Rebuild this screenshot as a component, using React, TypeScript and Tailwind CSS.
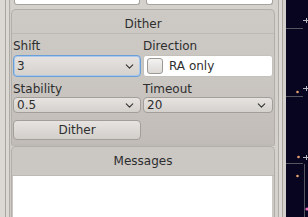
import { ChevronDown } from 'lucide-react'

function Select({ value, focused }: { value: string; focused?: boolean }) {
  return (
    <div
      className={`flex items-center justify-between rounded-[4px] border bg-gradient-to-b from-[#e6e3e0] to-[#d4d1cd] pl-[3px] pr-[4px] ${
        focused ? 'h-[22px] border-[#6a9fd8] shadow-[inset_0_0_0_1px_#a9c8ea]' : 'h-[16px] border-[#a29e9a]'
      }`}
    >
      <span>{value}</span>
      <ChevronDown size={13} strokeWidth={2} className="text-[#333]" />
    </div>
  )
}

function Sky() {
  return (
    <svg width="22" height="217" className="block">
      <rect width="22" height="217" fill="#070520" />
      <line x1="0" y1="28.5" x2="17" y2="28.5" stroke="#55555f" />
      <line x1="0" y1="96.5" x2="17" y2="96.5" stroke="#55555f" />
      <line x1="0" y1="163.5" x2="17" y2="163.5" stroke="#55555f" />
      <line x1="18.5" y1="164" x2="18.5" y2="217" stroke="#55555f" />
      <line x1="17" y1="20.5" x2="22" y2="20.5" stroke="#b8b8c0" />
      <line x1="20.5" y1="18" x2="20.5" y2="23" stroke="#b8b8c0" />
      <line x1="17" y1="88.5" x2="22" y2="88.5" stroke="#b8b8c0" />
      <line x1="20.5" y1="86" x2="20.5" y2="91" stroke="#b8b8c0" />
      <line x1="17" y1="157.5" x2="22" y2="157.5" stroke="#b8b8c0" />
      <line x1="20.5" y1="155" x2="20.5" y2="160" stroke="#b8b8c0" />
      <circle cx="11.5" cy="92" r="1.3" fill="#e8a070" />
      <circle cx="12.5" cy="157" r="1.3" fill="#e8a070" />
      <circle cx="11.5" cy="176" r="1.3" fill="#e8a070" />
      <circle cx="21" cy="209" r="1.6" fill="#f070c0" />
    </svg>
  )
}

export default function App() {
  return (
    <div
      className="flex h-[217px] w-[308px] overflow-hidden bg-[#d4d0cc] text-[12px] leading-none text-[#2e2e2e]"
      style={{ fontFamily: '"DejaVu Sans", sans-serif' }}
    >
      {/* left frame edge */}
      <div className="flex w-[11px] shrink-0">
        <div className="w-[5px] bg-[#dcd8d4]" />
        <div className="w-px bg-[#a8a4a0]" />
        <div className="w-[3px] bg-[#dcd8d4]" />
        <div className="w-px bg-[#aeaaa6]" />
        <div className="w-px bg-[#d0ccc8]" />
      </div>

      <div className="flex w-[264px] shrink-0 flex-col">
        {/* tail of widgets above */}
        <div className="flex h-[9px] gap-[6px] pl-[3px] pr-[2px]">
          <div className="h-[5px] w-[126px] rounded-b-[3px] border-x border-b border-[#a6a29e] bg-white" />
          <div className="h-[5px] flex-1 rounded-b-[3px] border-x border-b border-[#a6a29e] bg-white" />
        </div>

        {/* Dither group */}
        <div className="flex h-[135px] flex-col rounded-t-[5px] border border-b-0 border-[#b2aeaa] bg-gradient-to-b from-[#cdc9c5] via-[#cac6c2] to-[#c2bcb8]">
          <div className="h-[24px] border-b border-[#bdb9b5] pt-[8px] text-center">Dither</div>
          <div className="grid grid-cols-[128px_1fr] gap-x-[2px] pl-px pr-px">
            <div className="pt-[6px] pb-[3px]">Shift</div>
            <div className="pt-[6px] pb-[3px]">Direction</div>
            <Select value="3" focused />
            <div className="flex h-[22px] items-center gap-[6px] rounded-[3px] border border-[#c4c0bc] bg-white pl-[3px]">
              <div className="h-[16px] w-[16px] rounded-[3px] border border-[#9c9894] bg-gradient-to-b from-[#f4f3f2] to-[#dcd9d6]" />
              <span>RA only</span>
            </div>
            <div className="pt-[6px] pb-[2px]">Stability</div>
            <div className="pt-[6px] pb-[2px]">Timeout</div>
            <Select value="0.5" />
            <Select value="20" />
            <div className="mt-[7px] flex h-[20px] items-center justify-center rounded-[4px] border border-[#a29e9a] bg-gradient-to-b from-[#e6e3e0] to-[#d2cfcb]">
              Dither
            </div>
          </div>
        </div>
        <div className="h-[2px] bg-[#bdb9b5]" />

        {/* Messages group */}
        <div className="flex flex-1 flex-col rounded-t-[5px] border border-b-0 border-[#b2aeaa] bg-[#cbc7c3]">
          <div className="h-[29px] border-b border-[#bdb9b5] pt-[8px] text-center">Messages</div>
          <div className="ml-px mr-[2px] flex-1 bg-white" />
        </div>
      </div>

      {/* splitter */}
      <div className="flex w-[11px] shrink-0">
        <div className="w-[3px] bg-[#d4d0cc]" />
        <div className="w-px bg-[#b0aca8]" />
        <div className="w-[3px] bg-[#dcd8d4]" />
        <div className="w-px bg-[#a8a4a0]" />
        <div className="w-[3px] bg-[#d4d0cc]" />
      </div>

      <Sky />
    </div>
  )
}
